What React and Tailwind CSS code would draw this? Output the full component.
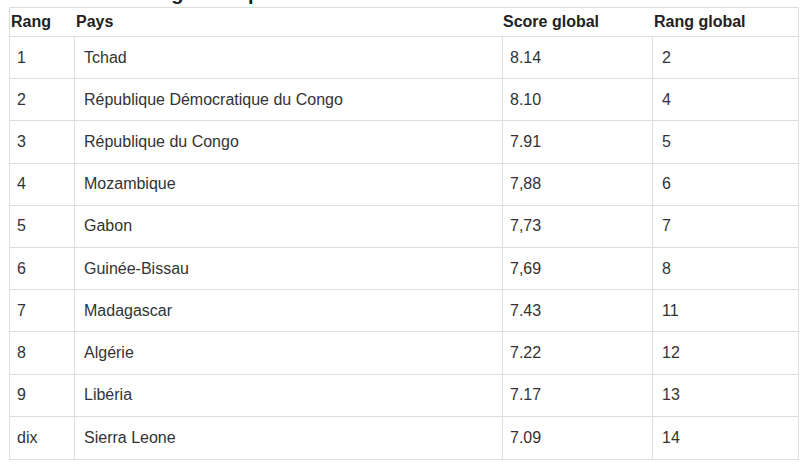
import React from "react";

const rows = [
  ["1", "Tchad", "8.14", "2"],
  ["2", "République Démocratique du Congo", "8.10", "4"],
  ["3", "République du Congo", "7.91", "5"],
  ["4", "Mozambique", "7,88", "6"],
  ["5", "Gabon", "7,73", "7"],
  ["6", "Guinée-Bissau", "7,69", "8"],
  ["7", "Madagascar", "7.43", "11"],
  ["8", "Algérie", "7.22", "12"],
  ["9", "Libéria", "7.17", "13"],
  ["dix", "Sierra Leone", "7.09", "14"],
];

export default function App() {
  return (
    <div
      className="w-[808px] h-[466px] bg-white overflow-hidden"
      style={{ fontFamily: '"Liberation Sans", Arial, sans-serif' }}
    >
      <div className="h-[7px] overflow-hidden pl-[9px]">
        <div className="mt-[-19px] text-[20px] leading-[24px] font-bold text-[#222] whitespace-nowrap">
          Le classement régional : palmarès
        </div>
      </div>
      <div className="ml-[9px] w-[790px] border border-[#dddddd] text-[16px]">
        <div className="grid grid-cols-[64px_428px_150px_146px] h-[29px] border-b border-[#dddddd] font-bold text-[#222] items-center">
          <div className="pl-[1px]">Rang</div>
          <div className="pl-[2px]">Pays</div>
          <div className="pl-[1px]">Score global</div>
          <div className="pl-[2px]">Rang global</div>
        </div>
        {rows.map((r, i) => (
          <div
            key={i}
            className="grid grid-cols-[64px_428px_150px_146px] h-[42.2px] border-b border-[#dddddd] text-[#333] last:border-b-0"
          >
            <div className="pl-[7px] flex items-center">{r[0]}</div>
            <div className="pl-[9px] border-l border-[#dddddd] flex items-center">{r[1]}</div>
            <div className="pl-[7px] border-l border-[#dddddd] flex items-center">{r[2]}</div>
            <div className="pl-[9px] border-l border-[#dddddd] flex items-center">{r[3]}</div>
          </div>
        ))}
      </div>
    </div>
  );
}
